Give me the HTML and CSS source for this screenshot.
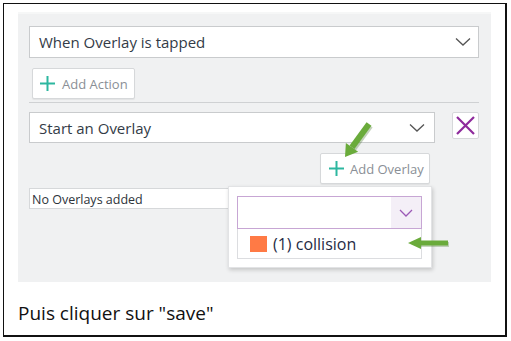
FILE: index.html
```html
<!DOCTYPE html>
<html>
<head>
<meta charset="utf-8">
<link rel="stylesheet" href="styles.css">
</head>
<body>
<div class="frame">
  <div class="panel">
    <div class="select sel-trigger">
      <span>When Overlay is tapped</span>
      <svg class="chev" width="16" height="10" viewBox="0 0 16 10"><path d="M1 1.5 L8 8 L15 1.5" fill="none" stroke="#555" stroke-width="1.3"/></svg>
    </div>
    <div class="btn btn-action">
      <svg class="plus" width="15" height="15" viewBox="0 0 15 15"><path d="M7.5 0 V15 M0 7.5 H15" stroke="#2db7a0" stroke-width="2"/></svg>
      <span>Add Action</span>
    </div>
    <div class="divider"></div>
    <div class="row">
      <div class="select sel-start">
        <span>Start an Overlay</span>
        <svg class="chev" width="16" height="10" viewBox="0 0 16 10"><path d="M1 1.5 L8 8 L15 1.5" fill="none" stroke="#555" stroke-width="1.3"/></svg>
      </div>
      <div class="xbtn">
        <svg width="19" height="19" viewBox="0 0 19 19"><path d="M1 1 L18 18 M18 1 L1 18" stroke="#8e2a9c" stroke-width="2.2"/></svg>
      </div>
    </div>
    <div class="row-right">
      <div class="btn btn-overlay">
        <svg class="plus" width="15" height="15" viewBox="0 0 15 15"><path d="M7.5 0 V15 M0 7.5 H15" stroke="#2db7a0" stroke-width="2"/></svg>
        <span>Add Overlay</span>
      </div>
    </div>
    <div class="none-field">No Overlays added</div>
  </div>
  <p class="caption">Puis cliquer sur "save"</p>

  <div class="popup">
    <div class="pop-select">
      <div class="pop-input"></div>
      <div class="pop-chev">
        <svg width="14" height="8" viewBox="0 0 14 8"><path d="M1 1 L7 7 L13 1" fill="none" stroke="#9b59b6" stroke-width="1.3"/></svg>
      </div>
    </div>
    <div class="pop-item">
      <span class="swatch"></span>
      <span>(1) collision</span>
    </div>
  </div>

  <svg class="arrow arrow-diag" width="36" height="44" viewBox="0 0 36 44">
    <path d="M30 5.5 L13 28.8" stroke="#3d6a22" stroke-opacity="0.3" stroke-width="6.5"/>
    <path d="M29 4 L12 27.3" stroke="#6aab3b" stroke-width="6"/>
    <path d="M5 37 L18.1 31.7 L5.9 22.9 Z" fill="#6aab3b"/>
  </svg>
  <svg class="arrow arrow-left" width="44" height="16" viewBox="0 0 44 16">
    <path d="M14 8.5 H42" stroke="#4a7a2a" stroke-opacity="0.3" stroke-width="5" />
    <path d="M13 7 H41" stroke="#6aab3b" stroke-width="5"/>
    <path d="M1 7 L14 1 L14 13 Z" fill="#6aab3b"/>
  </svg>
</div>
</body>
</html>
```

FILE: styles.css
```css
* { box-sizing: border-box; }
html, body { margin: 0; padding: 0; background: #fff; }
body { font-family: "Open Sans", "Noto Sans", sans-serif; }

.frame {
  position: relative;
  margin: 3px 0 0 3px;
  width: 504px;
  height: 334px;
  border-style: solid;
  border-color: #111;
  border-width: 1px 2px 2px 1px;
}

.panel {
  margin: 8px 0 0 14px;
  width: 473px;
  height: 270px;
  background: #f0f1f2;
  border-top: 2px solid #f6f7f7;
  padding: 12px 12px 0 11px;
}

.select {
  background: #fff;
  border: 1px solid #c9cbcd;
  display: flex;
  align-items: center;
  justify-content: space-between;
  color: #333b47;
  font-size: 15px;
  padding: 0 7px 0 9px;
}
.sel-trigger { height: 32px; }
.sel-start { height: 31px; width: 406px; padding-right: 9px; }

.btn {
  background: #fff;
  border: 1px solid #d6d8da;
  border-radius: 2px;
  display: flex;
  align-items: center;
  gap: 7px;
  color: #8a8f96;
  font-size: 13px;
  height: 31px;
  box-shadow: 0 1px 1px rgba(0,0,0,0.06);
}
.btn-action {
  margin: 10px 0 0 3px;
  width: 103px;
  padding-left: 7px;
}
.btn-overlay {
  width: 110px;
  padding-left: 8px;
  gap: 6px;
}

.divider {
  margin-top: 3px;
  height: 1px;
  background: #cfd1d3;
}

.row {
  margin-top: 9px;
  display: flex;
  align-items: flex-start;
  gap: 17px;
}
.xbtn {
  width: 27px;
  height: 27px;
  background: #fff;
  border: 1px solid #d6d8da;
  border-radius: 2px;
  display: flex;
  align-items: center;
  justify-content: center;
}

.row-right {
  margin-top: 10px;
  display: flex;
  justify-content: flex-end;
  padding-right: 49px;
}

.none-field {
  margin-top: 4px;
  width: 215px;
  height: 21px;
  background: #fff;
  border: 1px solid #d6d8da;
  font-size: 12.5px;
  color: #2d333a;
  padding: 2px 0 0 2px;
  line-height: 17px;
}

.caption {
  margin: 18px 0 0 14px;
  font-family: "Open Sans", sans-serif;
  font-size: 19px;
  color: #111;
}

.popup {
  position: absolute;
  left: 224px;
  top: 182px;
  width: 204px;
  height: 82px;
  background: #fff;
  border: 1px solid #e2e3e5;
  box-shadow: 1px 2px 4px rgba(0,0,0,0.18);
  padding: 9px 9px 0 8px;
}
.pop-select {
  display: flex;
  height: 33px;
  border: 1px solid #c7a6d4;
}
.pop-input { flex: 1; }
.pop-chev {
  width: 30px;
  background: #f4eff7;
  display: flex;
  align-items: center;
  justify-content: center;
}
.pop-item {
  height: 30px;
  border: 1px solid #dcdde0;
  border-top: none;
  display: flex;
  align-items: center;
  gap: 6px;
  padding-left: 12px;
  font-size: 16px;
  color: #1f2b44;
}
.swatch {
  width: 17px;
  height: 16px;
  background: #ff7a45;
}

.arrow { position: absolute; }
.arrow-diag { left: 336px; top: 116px; }
.arrow-left { left: 403px; top: 232px; }
```
